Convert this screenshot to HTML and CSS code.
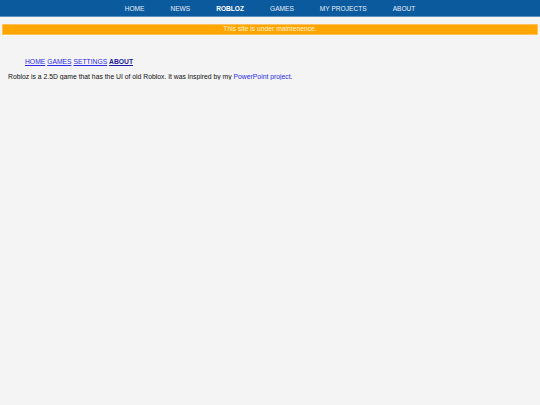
FILE: index.html
```html
<!DOCTYPE html>
<html>
<head>
<meta charset="utf-8">
<link rel="stylesheet" href="styles.css">
</head>
<body>
<header class="topbar">
  <nav class="topnav">
    <a href="#">HOME</a>
    <a href="#">NEWS</a>
    <a href="#" class="active">ROBLOZ</a>
    <a href="#">GAMES</a>
    <a href="#">MY PROJECTS</a>
    <a href="#">ABOUT</a>
  </nav>
</header>
<div class="notice">This site is under maintenence.</div>
<main class="content">
  <nav class="subnav">
    <a href="#">HOME</a> <a href="#">GAMES</a> <a href="#">SETTINGS</a> <a href="#" class="current">ABOUT</a>
  </nav>
  <p class="desc">Robloz is a 2.5D game that has the UI of old Roblox. It was inspired by my <a href="#">PowerPoint project</a>.</p>
</main>
</body>
</html>
```
FILE: styles.css
```css
html, body {
  margin: 0;
  padding: 0;
  background: #f4f4f4;
  font-family: "Liberation Sans", Arial, sans-serif;
}
.topbar {
  background: #0b5a9e;
  height: 17px;
  border-bottom: 1px solid #5e8fbd;
  box-sizing: border-box;
}
.topnav {
  display: flex;
  justify-content: center;
  align-items: center;
  height: 100%;
}
.topnav a {
  color: #e6eef6;
  text-decoration: none;
  font-size: 6.6px;
  padding: 0 13px;
}
.topnav a.active {
  font-weight: bold;
  color: #fff;
}
.notice {
  margin: 7px 2px 0;
  background: #ffa500;
  border: 1px solid #ffc25a;
  color: #fff3d6;
  font-size: 6.75px;
  text-align: center;
  height: 9px;
  line-height: 8px;
  box-sizing: content-box;
}
.content {
  padding: 0 8px;
}
.subnav {
  margin: 23px 0 0 17px;
  font-size: 6.75px;
}
.subnav a {
  color: #2a2ae8;
}
.subnav a.current {
  font-weight: bold;
  color: #1a1aa0;
}
.desc {
  margin: 8px 0 0;
  font-size: 6.8px;
  color: #111;
}
.desc a {
  color: #2a2ae8;
}
```
